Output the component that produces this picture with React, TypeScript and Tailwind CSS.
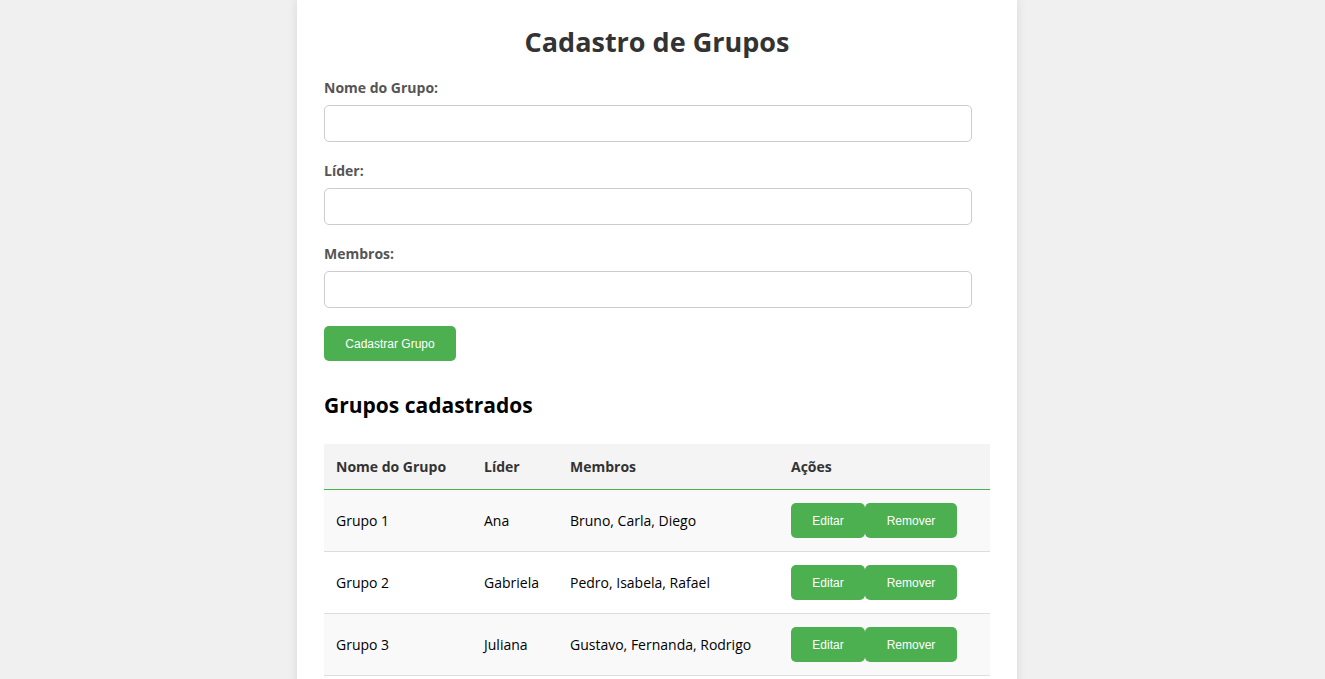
import React from "react";

const rows = [
  { nome: "Grupo 1", lider: "Ana", membros: "Bruno, Carla, Diego", bg: "bg-[#f9f9f9]" },
  { nome: "Grupo 2", lider: "Gabriela", membros: "Pedro, Isabela, Rafael", bg: "bg-white" },
  { nome: "Grupo 3", lider: "Juliana", membros: "Gustavo, Fernanda, Rodrigo", bg: "bg-[#f9f9f9]" },
];

function Field({ label }: { label: string }) {
  return (
    <div className="flex flex-col">
      <label className="text-[14px] font-bold text-[#555] leading-[18px] mb-[8px]">{label}</label>
      <input className="w-[648px] h-[37px] border border-[#ccc] rounded-[5px] bg-white outline-none" />
    </div>
  );
}

const th = "h-[46px] text-left font-bold text-[#333] px-[12px] border-b border-solid border-[#4CAF50]";
const td = "h-[62px] px-[12px] text-black border-b border-solid border-[#ddd]";

export default function App() {
  return (
    <div className="min-h-[679px] bg-[#f0f0f0] flex justify-center pr-[11px]" style={{ fontFamily: '"Open Sans", "Noto Sans", sans-serif' }}>
      <div className="w-[720px] bg-white shadow-[0_0_10px_rgba(0,0,0,0.1)] px-[27px] pt-[23px] pb-[20px]">
        <h1 className="text-center text-[27px] font-bold text-[#333] leading-[38px]">Cadastro de Grupos</h1>
        <div className="mt-[18px] flex flex-col gap-[20px]">
          <Field label="Nome do Grupo:" />
          <Field label="Líder:" />
          <Field label="Membros:" />
        </div>
        <button
          className="mt-[18px] w-[132px] h-[35px] bg-[#4CAF50] text-white text-[12px] rounded-[5px]"
          style={{ fontFamily: '"Liberation Sans", Arial, sans-serif' }}
        >
          Cadastrar Grupo
        </button>
        <h2 className="mt-[29px] text-[21px] font-bold text-black leading-[30px]">Grupos cadastrados</h2>
        <table className="mt-[24px] w-[666px] border-separate border-spacing-0 text-[14px]">
          <thead>
            <tr className="bg-[#f4f4f4]">
              <th className={`w-[148px] ${th}`}>Nome do Grupo</th>
              <th className={`w-[86px] ${th}`}>Líder</th>
              <th className={`w-[221px] ${th}`}>Membros</th>
              <th className={th}>Ações</th>
            </tr>
          </thead>
          <tbody>
            {rows.map((r) => (
              <tr key={r.nome} className={r.bg}>
                <td className={td}>{r.nome}</td>
                <td className={td}>{r.lider}</td>
                <td className={td}>{r.membros}</td>
                <td className={td}>
                  <div className="flex" style={{ fontFamily: '"Liberation Sans", Arial, sans-serif' }}>
                    <button className="w-[74px] h-[35px] bg-[#4CAF50] text-white text-[12px] rounded-[5px]">Editar</button>
                    <button className="w-[92px] h-[35px] bg-[#4CAF50] text-white text-[12px] rounded-[5px]">Remover</button>
                  </div>
                </td>
              </tr>
            ))}
          </tbody>
        </table>
      </div>
    </div>
  );
}
